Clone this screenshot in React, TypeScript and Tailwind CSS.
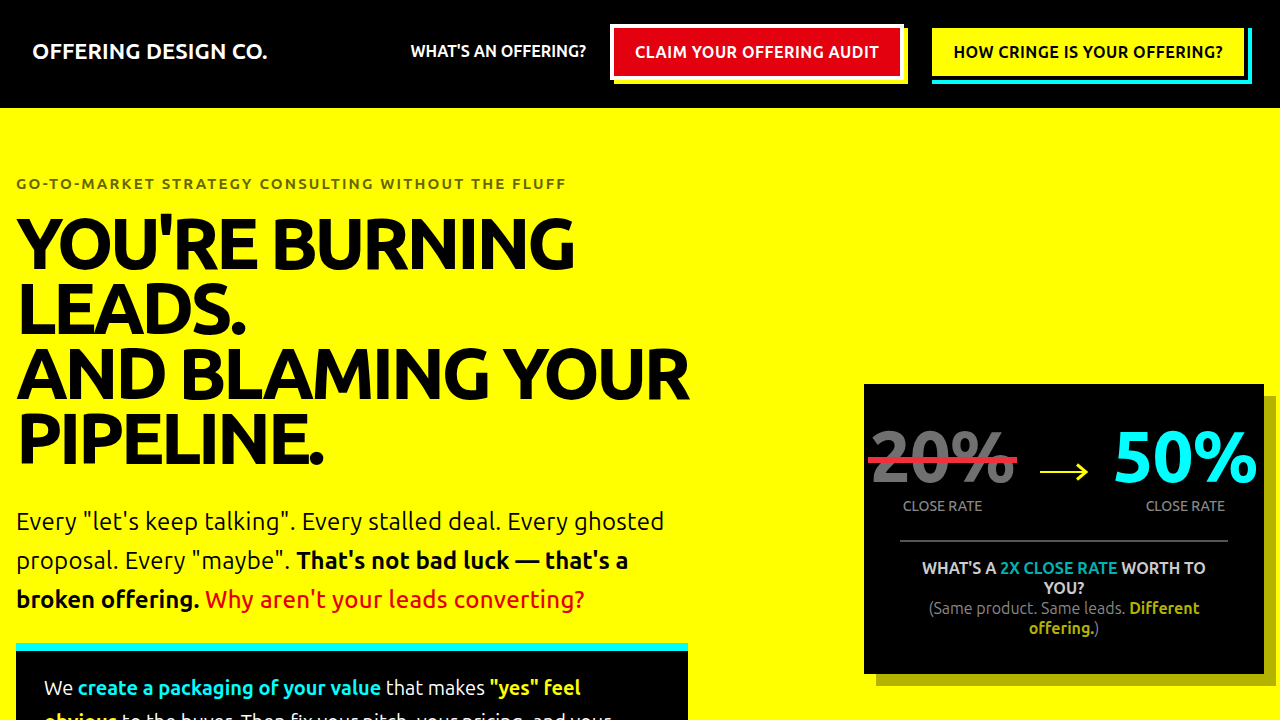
import { useState } from "react";

type Stat = {
  value: string;
  label: string;
  struck?: boolean;
};

const before: Stat = { value: "20%", label: "CLOSE RATE", struck: true };
const after: Stat = { value: "50%", label: "CLOSE RATE" };

const StatBlock = ({ stat }: { stat: Stat }) => {
  return (
    <div className="flex flex-col items-center">
      <div
        className={
          stat.struck
            ? "relative text-[72px] font-black leading-[72px] tracking-[-0.01em] text-[#707070]"
            : "relative text-[72px] font-black leading-[72px] tracking-[-0.01em] text-[#00ffff]"
        }
      >
        {stat.value}
        {/* red strike bar over the old number */}
        {stat.struck && <span className="absolute -left-0.5 -right-0.5 top-[37px] h-1.5 bg-[#f0303a]" />}
      </div>
      <span className="mt-1 text-sm font-medium leading-5 text-[#888888]">{stat.label}</span>
    </div>
  );
};

const App = () => {
  const [menuOpen] = useState(false);

  return (
    <div className="min-h-screen bg-[#ffff00] font-['Ubuntu','Lato','Liberation_Sans',sans-serif]">
      {/* top bar */}
      <header className="flex h-[108px] items-center justify-between bg-black px-8 pb-1">
        <a href="#" className="-mt-1 text-[22px] font-bold tracking-[0.1px] text-white">
          OFFERING DESIGN CO.
        </a>
        <nav className="flex items-center gap-6" data-open={menuOpen}>
          <a href="#" className="-mt-0.5 text-base font-bold text-white">
            WHAT'S AN OFFERING?
          </a>
          <a
            href="#"
            className="border-4 border-white bg-[#e3000f] px-[21px] py-3 text-base font-bold leading-6 tracking-[0.5px] text-white shadow-[4px_4px_0_#ffff00]"
          >
            CLAIM YOUR OFFERING AUDIT
          </a>
          <a
            href="#"
            className="border-4 border-black bg-[#ffff00] px-[21px] py-3 text-base font-bold leading-6 tracking-[0.5px] text-black shadow-[4px_4px_0_#00ffff]"
          >
            HOW CRINGE IS YOUR OFFERING?
          </a>
        </nav>
      </header>

      {/* hero */}
      <section className="flex items-start justify-between px-4 pt-16 pb-10">
        <div className="max-w-2xl">
          <p className="text-[15px] font-bold leading-6 tracking-[0.145em] text-[#666600]">
            GO-TO-MARKET STRATEGY CONSULTING WITHOUT THE FLUFF
          </p>
          <h1 className="mt-3.5 whitespace-nowrap text-[72px] font-black leading-[65px] tracking-[-0.05em] text-black">
            YOU'RE BURNING
            <br />
            LEADS.
            <br />
            AND BLAMING YOUR
            <br />
            PIPELINE.
          </h1>
          <p className="mt-8 text-[24px] leading-[39px] tracking-[0.3px] text-black">
            Every "let's keep talking". Every stalled deal. Every ghosted proposal. Every "maybe".{" "}
            <strong className="font-bold tracking-normal">That's not bad luck — that's a broken offering.</strong>{" "}
            <span className="font-medium text-[#e3000f]">Why aren't your leads converting?</span>
          </p>
          <div className="mt-6 border-t-8 border-[#00ffff] bg-black pt-5 pr-[60px] pb-8 pl-7">
            <p className="text-[20px] leading-[34px] text-white">
              We <span className="font-bold text-[#00ffff]">create a packaging of your value</span> that
              makes <span className="font-bold text-[#ffff00]">"yes" feel obvious</span> to the buyer. Then
              fix your pitch, your pricing, and your sales process so every conversation moves toward a
              close. No templates, no recycled decks, no fluff — just an offering your buyers can't
              ignore.
            </p>
          </div>
        </div>

        {/* close rate card */}
        <div className="mt-[212px] w-[400px] bg-black px-9 pt-9 pb-9 shadow-[12px_12px_0_#b3b300]">
          <div className="-mx-[30px] flex items-start justify-between">
            <StatBlock stat={before} />
            <svg width="50" height="20" viewBox="0 0 50 20" className="mt-[42px]" fill="none">
              <path d="M1 10H46" stroke="#ffff00" strokeWidth="2" />
              <path d="M38 2.5L47 10L38 17.5" stroke="#ffff00" strokeWidth="3" strokeLinejoin="miter" />
            </svg>
            <StatBlock stat={after} />
          </div>
          <div className="mt-6 h-0.5 bg-[#555555]" />
          <p className="mt-4 text-center text-base font-bold leading-5 text-[#cccccc]">
            WHAT'S A <span className="text-[#00b3b3]">2X CLOSE RATE</span> WORTH TO
            <br />
            YOU?
          </p>
          <p className="text-center text-base leading-5 text-[#888888]">
            (Same product. Same leads. <span className="font-bold text-[#b3b300]">Different</span>
            <br />
            <span className="font-bold text-[#b3b300]">offering.</span>)
          </p>
        </div>
      </section>
    </div>
  );
};

export default App;
